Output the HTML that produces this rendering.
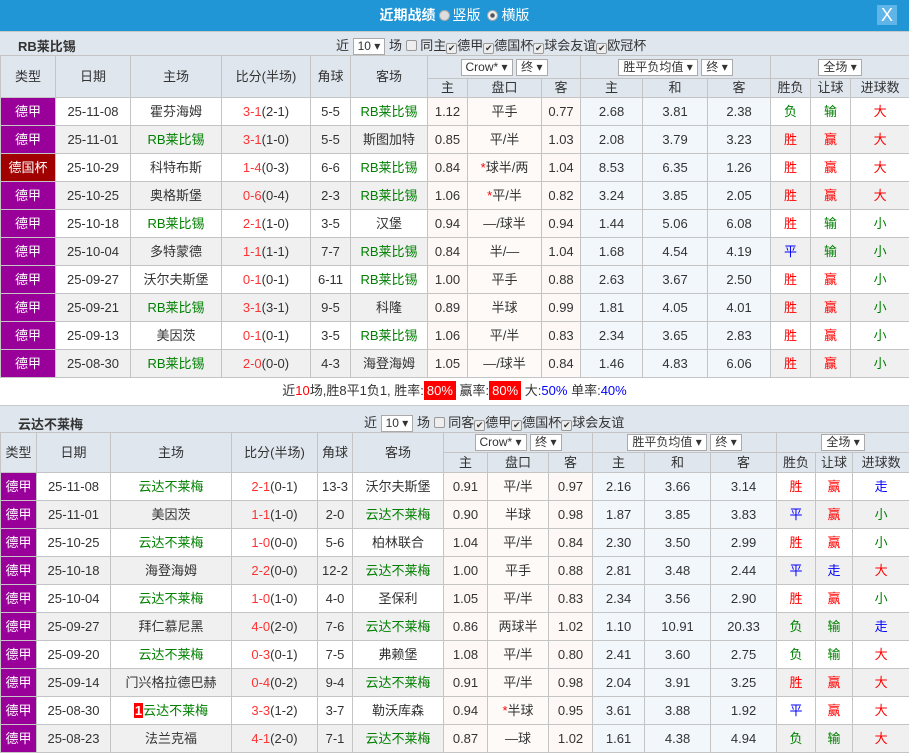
<!DOCTYPE html>
<html><head><meta charset="utf-8"><style>
*{margin:0;padding:0;box-sizing:border-box}
body{width:909px;height:752px;overflow:hidden;background:#fff;font-family:"Liberation Sans","Noto Sans CJK SC",sans-serif;font-size:13px;color:#333;position:relative}
.top{position:absolute;left:0;top:0;width:909px;height:31px;background:#2196d6;color:#fff;text-align:center;line-height:31px;font-size:14px}
.top b{font-weight:bold}
.rad{display:inline-block;width:11px;height:11px;border-radius:50%;background:#ddd;border:1px solid #aaa;vertical-align:-1px;margin:0 3px}
.rad.on{background:radial-gradient(#555 30%,#eee 40%)}
.x{position:absolute;right:12px;top:5px;width:20px;height:20px;background:#5fb4e8;color:#fff;font-size:18px;line-height:20px;text-align:center}
.sec{position:absolute;left:0;width:909px;background:#dfe6ee;border-top:1px solid #c8c8c8}
.sec .t{position:absolute;left:18px;font-weight:bold;font-size:13px;color:#333}
.sec .c{position:absolute;font-size:13px;color:#333;white-space:nowrap}
.sel{display:inline-block;background:#fff;border:1px solid #aaa;height:17px;line-height:15px;padding:0 4px;font-size:12px;vertical-align:middle}
.cb{display:inline-block;width:11px;height:11px;border:1px solid #999;background:#eee;border-radius:2px;vertical-align:-1px;font-size:9px;line-height:9px;text-align:center}
table{position:absolute;left:0;border-collapse:collapse;table-layout:fixed;width:909px}
td{border:1px solid #c4c4c4;text-align:center;height:28px;white-space:nowrap;overflow:hidden;padding:0;line-height:16px}
.h td{background:#dfe6ee;color:#333;height:19px}
.hh td{height:23px}
.t2 .hh td{height:20px}
.t2 .h td{height:20px}
.t2 .hh + .h td{height:20px}
.ty{background:#990099!important;color:#fff}
.cup{background:#a00000!important;color:#fff}
tr.e td{background:#f0f0f0}
td.o{background:#fdf8f5!important}
td.p{background:#fdfaf7!important}
td.b{background:#f1f7fb!important}
.g{color:#008000}.r{color:#f00}.bl{color:#00f}
.s{color:#f33}
.sum{position:absolute;left:0;top:377px;width:909px;height:28px;line-height:28px;text-align:center;font-size:13px}
.red{background:#f00;color:#fff;padding:2px 3px}
</style></head><body>
<div class="top"><b>近期战绩</b><span class="rad"></span>竖版 <span class="rad on"></span>横版<div class="x">X</div></div>

<div class="sec" style="top:31px;height:24px">
<div class="t" style="top:4px">RB莱比锡</div>
<div class="c" style="left:336px;top:3px">近 <span class="sel">10 ▾</span> 场 <span class="cb"></span> 同主<span class="cb">✔</span>德甲<span class="cb">✔</span>德国杯<span class="cb">✔</span>球会友谊<span class="cb">✔</span>欧冠杯</div>
</div>

<table style="top:55px">
<colgroup><col width="55"><col width="75"><col width="91"><col width="89"><col width="40"><col width="77"><col width="40"><col width="74"><col width="39"><col width="62"><col width="65"><col width="63"><col width="40"><col width="40"><col width="59"></colgroup>
<tr class="h hh"><td rowspan="2">类型</td><td rowspan="2">日期</td><td rowspan="2">主场</td><td rowspan="2">比分(半场)</td><td rowspan="2">角球</td><td rowspan="2">客场</td><td colspan="3"><span class="sel">Crow* ▾</span> <span class="sel">终 ▾</span></td><td colspan="3"><span class="sel">胜平负均值 ▾</span> <span class="sel">终 ▾</span></td><td colspan="3"><span class="sel">全场 ▾</span></td></tr>
<tr class="h"><td>主</td><td>盘口</td><td>客</td><td>主</td><td>和</td><td>客</td><td>胜负</td><td>让球</td><td>进球数</td></tr>
<tr><td class="ty">德甲</td><td>25-11-08</td><td>霍芬海姆</td><td><span class="s">3-1</span>(2-1)</td><td>5-5</td><td class="g">RB莱比锡</td><td class="o">1.12</td><td class="p">平手</td><td class="o">0.77</td><td class="b">2.68</td><td class="b">3.81</td><td class="b">2.38</td><td class="g">负</td><td class="g">输</td><td class="r">大</td></tr>
<tr class="e"><td class="ty">德甲</td><td>25-11-01</td><td class="g">RB莱比锡</td><td><span class="s">3-1</span>(1-0)</td><td>5-5</td><td>斯图加特</td><td class="o">0.85</td><td class="p">平/半</td><td class="o">1.03</td><td class="b">2.08</td><td class="b">3.79</td><td class="b">3.23</td><td class="r">胜</td><td class="r">赢</td><td class="r">大</td></tr>
<tr><td class="cup">德国杯</td><td>25-10-29</td><td>科特布斯</td><td><span class="s">1-4</span>(0-3)</td><td>6-6</td><td class="g">RB莱比锡</td><td class="o">0.84</td><td class="p"><span class="r">*</span>球半/两</td><td class="o">1.04</td><td class="b">8.53</td><td class="b">6.35</td><td class="b">1.26</td><td class="r">胜</td><td class="r">赢</td><td class="r">大</td></tr>
<tr class="e"><td class="ty">德甲</td><td>25-10-25</td><td>奥格斯堡</td><td><span class="s">0-6</span>(0-4)</td><td>2-3</td><td class="g">RB莱比锡</td><td class="o">1.06</td><td class="p"><span class="r">*</span>平/半</td><td class="o">0.82</td><td class="b">3.24</td><td class="b">3.85</td><td class="b">2.05</td><td class="r">胜</td><td class="r">赢</td><td class="r">大</td></tr>
<tr><td class="ty">德甲</td><td>25-10-18</td><td class="g">RB莱比锡</td><td><span class="s">2-1</span>(1-0)</td><td>3-5</td><td>汉堡</td><td class="o">0.94</td><td class="p">—/球半</td><td class="o">0.94</td><td class="b">1.44</td><td class="b">5.06</td><td class="b">6.08</td><td class="r">胜</td><td class="g">输</td><td class="g">小</td></tr>
<tr class="e"><td class="ty">德甲</td><td>25-10-04</td><td>多特蒙德</td><td><span class="s">1-1</span>(1-1)</td><td>7-7</td><td class="g">RB莱比锡</td><td class="o">0.84</td><td class="p">半/—</td><td class="o">1.04</td><td class="b">1.68</td><td class="b">4.54</td><td class="b">4.19</td><td class="bl">平</td><td class="g">输</td><td class="g">小</td></tr>
<tr><td class="ty">德甲</td><td>25-09-27</td><td>沃尔夫斯堡</td><td><span class="s">0-1</span>(0-1)</td><td>6-11</td><td class="g">RB莱比锡</td><td class="o">1.00</td><td class="p">平手</td><td class="o">0.88</td><td class="b">2.63</td><td class="b">3.67</td><td class="b">2.50</td><td class="r">胜</td><td class="r">赢</td><td class="g">小</td></tr>
<tr class="e"><td class="ty">德甲</td><td>25-09-21</td><td class="g">RB莱比锡</td><td><span class="s">3-1</span>(3-1)</td><td>9-5</td><td>科隆</td><td class="o">0.89</td><td class="p">半球</td><td class="o">0.99</td><td class="b">1.81</td><td class="b">4.05</td><td class="b">4.01</td><td class="r">胜</td><td class="r">赢</td><td class="g">小</td></tr>
<tr><td class="ty">德甲</td><td>25-09-13</td><td>美因茨</td><td><span class="s">0-1</span>(0-1)</td><td>3-5</td><td class="g">RB莱比锡</td><td class="o">1.06</td><td class="p">平/半</td><td class="o">0.83</td><td class="b">2.34</td><td class="b">3.65</td><td class="b">2.83</td><td class="r">胜</td><td class="r">赢</td><td class="g">小</td></tr>
<tr class="e"><td class="ty">德甲</td><td>25-08-30</td><td class="g">RB莱比锡</td><td><span class="s">2-0</span>(0-0)</td><td>4-3</td><td>海登海姆</td><td class="o">1.05</td><td class="p">—/球半</td><td class="o">0.84</td><td class="b">1.46</td><td class="b">4.83</td><td class="b">6.06</td><td class="r">胜</td><td class="r">赢</td><td class="g">小</td></tr>
</table>

<div class="sum">近<span class="r">10</span>场,胜8平1负1, 胜率:<span class="red">80%</span> 赢率:<span class="red">80%</span> 大:<span class="bl">50%</span> 单率:<span class="bl">40%</span></div>

<div class="sec" style="top:405px;height:27px">
<div class="t" style="top:8px">云达不莱梅</div>
<div class="c" style="left:364px;top:6px">近 <span class="sel">10 ▾</span> 场 <span class="cb"></span> 同客<span class="cb">✔</span>德甲<span class="cb">✔</span>德国杯<span class="cb">✔</span>球会友谊</div>
</div>

<table class="t2" style="top:432px">
<colgroup><col width="36"><col width="74"><col width="121"><col width="86"><col width="35"><col width="91"><col width="44"><col width="61"><col width="44"><col width="52"><col width="66"><col width="66"><col width="39"><col width="37"><col width="57"></colgroup>
<tr class="h hh"><td rowspan="2">类型</td><td rowspan="2">日期</td><td rowspan="2">主场</td><td rowspan="2">比分(半场)</td><td rowspan="2">角球</td><td rowspan="2">客场</td><td colspan="3"><span class="sel">Crow* ▾</span> <span class="sel">终 ▾</span></td><td colspan="3"><span class="sel">胜平负均值 ▾</span> <span class="sel">终 ▾</span></td><td colspan="3"><span class="sel">全场 ▾</span></td></tr>
<tr class="h"><td>主</td><td>盘口</td><td>客</td><td>主</td><td>和</td><td>客</td><td>胜负</td><td>让球</td><td>进球数</td></tr>
<tr><td class="ty">德甲</td><td>25-11-08</td><td class="g">云达不莱梅</td><td><span class="s">2-1</span>(0-1)</td><td>13-3</td><td>沃尔夫斯堡</td><td class="o">0.91</td><td class="p">平/半</td><td class="o">0.97</td><td class="b">2.16</td><td class="b">3.66</td><td class="b">3.14</td><td class="r">胜</td><td class="r">赢</td><td class="bl">走</td></tr>
<tr class="e"><td class="ty">德甲</td><td>25-11-01</td><td>美因茨</td><td><span class="s">1-1</span>(1-0)</td><td>2-0</td><td class="g">云达不莱梅</td><td class="o">0.90</td><td class="p">半球</td><td class="o">0.98</td><td class="b">1.87</td><td class="b">3.85</td><td class="b">3.83</td><td class="bl">平</td><td class="r">赢</td><td class="g">小</td></tr>
<tr><td class="ty">德甲</td><td>25-10-25</td><td class="g">云达不莱梅</td><td><span class="s">1-0</span>(0-0)</td><td>5-6</td><td>柏林联合</td><td class="o">1.04</td><td class="p">平/半</td><td class="o">0.84</td><td class="b">2.30</td><td class="b">3.50</td><td class="b">2.99</td><td class="r">胜</td><td class="r">赢</td><td class="g">小</td></tr>
<tr class="e"><td class="ty">德甲</td><td>25-10-18</td><td>海登海姆</td><td><span class="s">2-2</span>(0-0)</td><td>12-2</td><td class="g">云达不莱梅</td><td class="o">1.00</td><td class="p">平手</td><td class="o">0.88</td><td class="b">2.81</td><td class="b">3.48</td><td class="b">2.44</td><td class="bl">平</td><td class="bl">走</td><td class="r">大</td></tr>
<tr><td class="ty">德甲</td><td>25-10-04</td><td class="g">云达不莱梅</td><td><span class="s">1-0</span>(1-0)</td><td>4-0</td><td>圣保利</td><td class="o">1.05</td><td class="p">平/半</td><td class="o">0.83</td><td class="b">2.34</td><td class="b">3.56</td><td class="b">2.90</td><td class="r">胜</td><td class="r">赢</td><td class="g">小</td></tr>
<tr class="e"><td class="ty">德甲</td><td>25-09-27</td><td>拜仁慕尼黑</td><td><span class="s">4-0</span>(2-0)</td><td>7-6</td><td class="g">云达不莱梅</td><td class="o">0.86</td><td class="p">两球半</td><td class="o">1.02</td><td class="b">1.10</td><td class="b">10.91</td><td class="b">20.33</td><td class="g">负</td><td class="g">输</td><td class="bl">走</td></tr>
<tr><td class="ty">德甲</td><td>25-09-20</td><td class="g">云达不莱梅</td><td><span class="s">0-3</span>(0-1)</td><td>7-5</td><td>弗赖堡</td><td class="o">1.08</td><td class="p">平/半</td><td class="o">0.80</td><td class="b">2.41</td><td class="b">3.60</td><td class="b">2.75</td><td class="g">负</td><td class="g">输</td><td class="r">大</td></tr>
<tr class="e"><td class="ty">德甲</td><td>25-09-14</td><td>门兴格拉德巴赫</td><td><span class="s">0-4</span>(0-2)</td><td>9-4</td><td class="g">云达不莱梅</td><td class="o">0.91</td><td class="p">平/半</td><td class="o">0.98</td><td class="b">2.04</td><td class="b">3.91</td><td class="b">3.25</td><td class="r">胜</td><td class="r">赢</td><td class="r">大</td></tr>
<tr><td class="ty">德甲</td><td>25-08-30</td><td class="g"><span style="background:#f00;color:#fff;font-weight:bold;padding:0 1px">1</span>云达不莱梅</td><td><span class="s">3-3</span>(1-2)</td><td>3-7</td><td>勒沃库森</td><td class="o">0.94</td><td class="p"><span class="r">*</span>半球</td><td class="o">0.95</td><td class="b">3.61</td><td class="b">3.88</td><td class="b">1.92</td><td class="bl">平</td><td class="r">赢</td><td class="r">大</td></tr>
<tr class="e"><td class="ty">德甲</td><td>25-08-23</td><td>法兰克福</td><td><span class="s">4-1</span>(2-0)</td><td>7-1</td><td class="g">云达不莱梅</td><td class="o">0.87</td><td class="p">—球</td><td class="o">1.02</td><td class="b">1.61</td><td class="b">4.38</td><td class="b">4.94</td><td class="g">负</td><td class="g">输</td><td class="r">大</td></tr>
</table>
</body></html>
